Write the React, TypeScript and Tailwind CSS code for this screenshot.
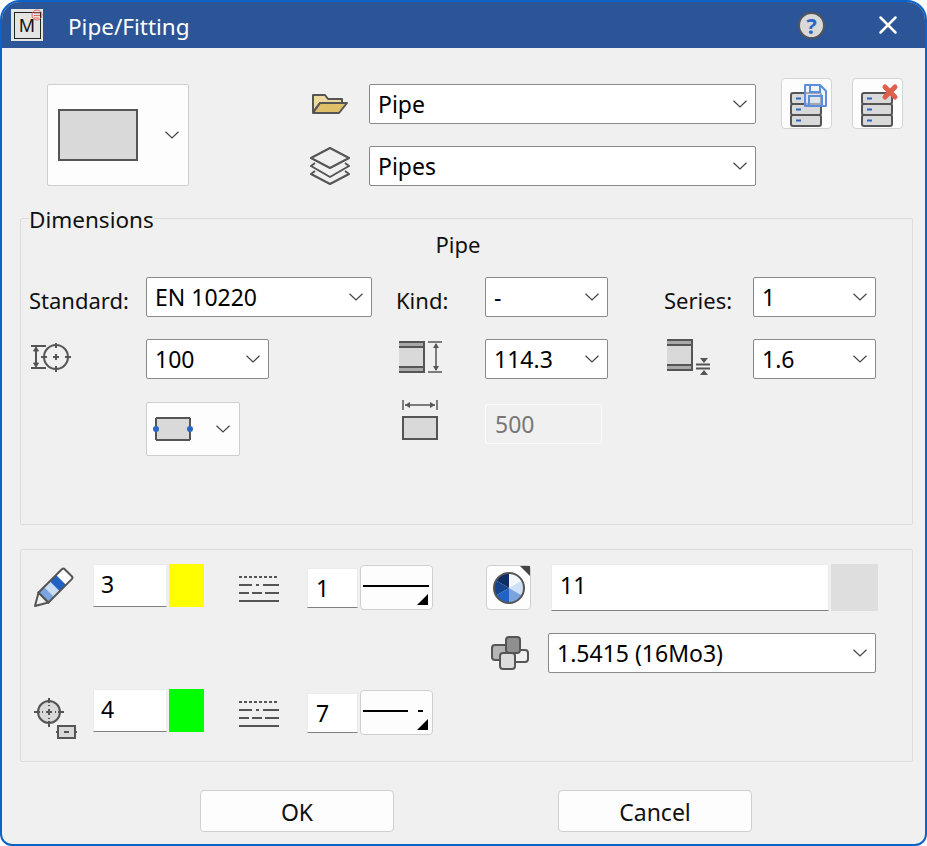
import React from 'react';
import { X } from 'lucide-react';

const chevron = (
    <svg width="14" height="8" viewBox="0 0 14 8" fill="none" stroke="#444" strokeWidth="1.2" className="shrink-0">
        <path d="M0.5 0.8L7 7l6.5-6.2" />
    </svg>
);

const Select = ({ value, className }: { value: string; className: string }) => (
    <div className={`flex items-center justify-between h-10 pl-[8px] pr-[8px] bg-white border border-[#8a8a8a] rounded-[2px] text-[23px] text-black ${className}`}>
        <span className="leading-none">{value}</span>
        {chevron}
    </div>
);

const Field = ({ value, className }: { value: string; className: string }) => (
    <div className={`flex items-center bg-white border border-[#ececec] border-b-[#808080] text-[23px] text-black ${className}`}>
        {value}
    </div>
);

const RowLabel = ({ children }: { children: React.ReactNode }) => (
    <span className="mt-[5px] -ml-px text-[22px] text-[#111] leading-none">{children}</span>
);

const Stack = () => (
    <g stroke="#555" strokeWidth="2" fill="#d9d9d9">
        <rect x="1" y="12" width="30" height="11" rx="2" />
        <rect x="1" y="23" width="30" height="11" rx="2" />
        <rect x="1" y="34" width="30" height="11" rx="2" />
        <path d="M6 17.500h5M6 28.500h5M6 39.500h5" stroke="#2a67c4" fill="none" />
    </g>
);

const LineStyles = () => (
    <svg width="40" height="28" viewBox="0 0 40 28" stroke="#555" strokeWidth="2" fill="none">
        <path d="M0 3h40" strokeDasharray="3 2" />
        <path d="M0 11h13M17 11h3M24 11h16" />
        <path d="M0 19h10M13 19h10M26 19h14" />
        <path d="M0 27h40" />
    </svg>
);

const PipeIcon = () => (
    <g>
        <rect x="0" y="1" width="24" height="30" fill="#d9d9d9" />
        <rect x="0" y="2" width="24" height="4" fill="#aaa" />
        <rect x="0" y="26" width="24" height="4" fill="#aaa" />
        <path d="M0 1h25v30H0" fill="none" stroke="#555" strokeWidth="2" />
        <path d="M0 6h24M0 26h24" stroke="#555" strokeWidth="2" />
    </g>
);

const Corner = () => (
    <span className="absolute right-[4px] bottom-[4px] w-0 h-0 border-l-[11px] border-l-transparent border-b-[11px] border-b-black" />
);

const LineButton = ({ broken }: { broken?: boolean }) => (
    <div className="relative w-[73px] h-[45px] ml-[2px] bg-[#fdfdfd] border border-[#cfcfcf] rounded-[4px]">
        <div className="flex gap-[10px] mt-[19px] mx-[2px]">
            <span className={`h-[2px] bg-black ${broken ? 'w-[45px]' : 'w-[66px]'}`} />
            {broken && <span className="h-[2px] w-[5px] bg-black" />}
        </div>
        <Corner />
    </div>
);

const Swatch = ({ className }: { className: string }) => (
    <div className={`w-[35px] h-[43px] ml-[2px] ${className}`} />
);

export default function App() {
    return (
        <div className="w-[927px] h-[846px] bg-white font-['Noto_Sans','Open_Sans',sans-serif]">
            <div className="flex flex-col h-full bg-[#f0f0f0] border-2 border-[#0b62c9] rounded-t-[20px] rounded-b-[12px] overflow-hidden">
                {/* title bar */}
                <div className="flex items-center h-[46px] shrink-0 bg-[#2b5597] pl-[9px] pr-[22px]">
                    <div className="relative flex items-center justify-center w-8 h-8 bg-[#e4e4e4]">
                        <div className="flex items-center justify-center w-[27px] h-[27px] border border-[#222] text-[18px] text-[#111] leading-none">M</div>
                        <svg className="absolute right-0 top-0" width="12" height="12" viewBox="0 0 12 12" fill="none" stroke="#e06a6a" strokeWidth="1">
                            <circle cx="6" cy="6" r="5" />
                            <path d="M3 4h6M3 6.500h6M3 9h5" />
                        </svg>
                    </div>
                    <span className="ml-[25px] mt-[4px] text-[22.5px] text-white leading-none">Pipe/Fitting</span>
                    <div className="ml-auto flex items-center justify-center w-[27px] h-[27px] rounded-full bg-[#d9d9d9] border-2 border-[#555] text-[22px] font-bold text-[#2a67c4] leading-none">?</div>
                    <X size={30} strokeWidth={2} className="ml-[48px] text-white" />
                </div>

                {/* top row */}
                <div className="flex items-start h-[170px] shrink-0 pl-[45px]">
                    <div className="flex items-center justify-between w-[142px] h-[102px] mt-[36px] pl-[10px] pr-[9px] bg-[#fdfdfd] border border-[#cfcfcf] rounded-[2px]">
                        <div className="w-[80px] h-[52px] bg-[#d9d9d9] border-2 border-[#555]" />
                        {chevron}
                    </div>
                    <div className="flex flex-col gap-[22px] mt-[36px] ml-[121px]">
                        <div className="flex items-center gap-[20px] pl-px">
                            <svg width="38" height="24" viewBox="0 0 38 24">
                                <path d="M2 20V3h12l3 4h14v4H9L2 20z" fill="#edd9a0" stroke="#555" strokeWidth="2" strokeLinejoin="round" />
                                <path d="M2 21l7-10h27l-8 10H2z" fill="#dfc069" stroke="#555" strokeWidth="2" strokeLinejoin="round" />
                            </svg>
                            <Select value="Pipe" className="w-[387px]" />
                        </div>
                        <div className="flex items-center gap-[17px]">
                            <svg width="42" height="40" viewBox="1 0 42 40" fill="none" stroke="#555" strokeWidth="2" strokeLinejoin="round">
                                <path d="M21 2l19 10-19 10L2 12 21 2z" />
                                <path d="M6 17l-4 3 19 11 19-11-4-3" />
                                <path d="M6 25l-4 3 19 10 19-10-4-3" />
                            </svg>
                            <Select value="Pipes" className="w-[387px]" />
                        </div>
                    </div>
                    <div className="flex gap-[20px] mt-[30px] ml-[25px]">
                        <div className="flex items-center justify-center w-[51px] h-[51px] bg-[#fdfdfd] border border-[#d4d4d4] rounded-[4px]">
                            <svg width="44" height="46" viewBox="0 0 44 46">
                                <g transform="translate(5 0)"><Stack /></g>
                                <path d="M20 4h15l6 6v15H20V4z" fill="#e4ecf8" fillOpacity="0.55" stroke="#5b8ede" strokeWidth="2" strokeLinejoin="round" />
                                <path d="M25 4v7h10V4M24 25V15h13v10" fill="none" stroke="#5b8ede" strokeWidth="2" />
                            </svg>
                        </div>
                        <div className="flex items-center justify-center w-[51px] h-[51px] bg-[#fdfdfd] border border-[#d4d4d4] rounded-[4px]">
                            <svg width="44" height="46" viewBox="0 0 44 46">
                                <g transform="translate(5 0)"><Stack /></g>
                                <path d="M29 6l10 10M39 6L29 16" stroke="#df5f4c" strokeWidth="5" strokeLinecap="round" />
                            </svg>
                        </div>
                    </div>
                </div>

                {/* dimensions group */}
                <fieldset className="relative h-[307px] shrink-0 ml-[18px] mr-[12px] border border-[#dcdcdc] rounded-[2px] min-w-0">
                    <span className="absolute left-[8px] top-[-10px] bg-[#f0f0f0] text-[22.5px] text-[#111] leading-none">Dimensions</span>
                    <div className="pt-[13px] pr-[17px] text-center text-[22px] text-[#111] leading-[24px]">Pipe</div>
                    <div className="grid grid-cols-[116px_251px_88px_180px_88px_123px] mt-[21px] pl-[9px] items-center">
                        <RowLabel>Standard:</RowLabel>
                        <Select value="EN 10220" className="w-[226px]" />
                        <RowLabel>Kind:</RowLabel>
                        <Select value="-" className="w-[123px]" />
                        <RowLabel>Series:</RowLabel>
                        <Select value="1" className="w-[123px]" />

                        <div className="mt-[22px]">
                            <svg width="42" height="32" viewBox="0 0 42 32" fill="none" stroke="#555" strokeWidth="2">
                                <path d="M1 3h15M1 25h15M6 5v18" />
                                <path d="M3.500 8l2.500-4 2.500 4zM3.500 20l2.500 4 2.500-4z" fill="#555" strokeWidth="1" />
                                <circle cx="26" cy="14" r="12" />
                                <path d="M26 -1v6M26 23v6M11 14h6M35 14h6M23 14h6M26 11v6" />
                            </svg>
                        </div>
                        <div className="mt-[22px]"><Select value="100" className="w-[123px]" /></div>
                        <div className="mt-[22px] pl-[2px]">
                            <svg width="46" height="36" viewBox="0 0 46 36">
                                <PipeIcon />
                                <path d="M29 1h14M29 31h14M37 3v26" stroke="#555" strokeWidth="1.500" fill="none" />
                                <path d="M34 7l3-5 3 5zM34 25l3 5 3-5z" fill="#555" />
                            </svg>
                        </div>
                        <div className="mt-[22px]"><Select value="114.3" className="w-[123px]" /></div>
                        <div className="mt-[22px] pl-[2px]">
                            <svg width="46" height="40" viewBox="0 0 46 40">
                                <PipeIcon />
                                <path d="M29 25.500h14M29 29.500h14" stroke="#555" strokeWidth="2" fill="none" />
                                <path d="M33 19h8l-4 5zM33 36h8l-4-5z" fill="#555" />
                            </svg>
                        </div>
                        <div className="mt-[22px]"><Select value="1.6" className="w-[123px]" /></div>

                        <div />
                        <div className="mt-[23px] self-start">
                            <div className="flex items-center justify-between w-[94px] h-[54px] pl-[6px] pr-[9px] bg-[#fdfdfd] border border-[#cfcfcf] rounded-[2px]">
                                <svg width="42" height="26" viewBox="0 0 42 26">
                                    <rect x="3" y="1" width="34" height="24" fill="#d9d9d9" />
                                    <path d="M3 2h34M3 24h34M3 2v22M37 2v22" stroke="#555" strokeWidth="2" fill="none" />
                                    <circle cx="3" cy="13" r="3" fill="#2a67c4" />
                                    <circle cx="37" cy="13" r="3" fill="#2a67c4" />
                                </svg>
                                {chevron}
                            </div>
                        </div>
                        <div className="mt-[21px] self-start pl-[5px]">
                            <svg width="36" height="40" viewBox="0 0 36 40">
                                <path d="M1 0v10M35 0v10M3 5h30" stroke="#555" strokeWidth="1.500" fill="none" />
                                <path d="M8 2L3 5l5 3zM28 2l5 3-5 3z" fill="#555" />
                                <rect x="1" y="17" width="34" height="22" fill="#d9d9d9" stroke="#555" strokeWidth="2" />
                            </svg>
                        </div>
                        <div className="mt-[25px] self-start">
                            <div className="flex items-center w-[117px] h-10 pl-[9px] bg-[#f0f0f0] border border-[#fafafa] text-[23px] text-[#777] rounded-[2px]">500</div>
                        </div>
                        <div />
                        <div />
                    </div>
                </fieldset>

                {/* attributes group */}
                <div className="flex h-[213px] shrink-0 mt-[24px] ml-[18px] mr-[12px] border border-[#dcdcdc] rounded-[2px] pl-[13px] pt-[14px]">
                    <div className="flex flex-col gap-[82px]">
                        <div className="flex items-start h-[43px]">
                            <svg className="mt-[3px]" width="40" height="40" viewBox="0 0 40 40">
                                <g transform="translate(1 39) rotate(-45)">
                                    <path d="M0 0l12-7v14z" fill="#f0f0f0" stroke="#555" strokeWidth="2" strokeLinejoin="round" />
                                    <rect x="12" y="-7" width="8" height="14" fill="#7ba3e0" />
                                    <rect x="20" y="-7" width="8" height="14" fill="#c9dcf4" />
                                    <rect x="28" y="-7" width="9" height="14" fill="#1f62c4" />
                                    <rect x="37" y="-7" width="10" height="14" fill="#fff" />
                                    <path d="M12-7h33q2 0 2 2v10q0 2-2 2H12z" fill="none" stroke="#555" strokeWidth="2" />
                                </g>
                            </svg>
                            <Field value="3" className="ml-[19px] w-[74px] h-[43px] pl-[7px] pb-[2px]" />
                            <Swatch className="bg-[#ffff00]" />
                            <div className="ml-[35px] mt-[10px]"><LineStyles /></div>
                            <Field value="1" className="ml-[28px] mt-[4px] w-[51px] h-10 pl-[8px]" />
                            <div className="mt-[1px]"><LineButton /></div>
                        </div>
                        <div className="flex items-start h-[43px]">
                            <svg className="mt-[9px]" width="44" height="42" viewBox="0 0 44 42" fill="none" stroke="#555" strokeWidth="2">
                                <circle cx="15" cy="14" r="11" fill="#d9d9d9" />
                                <path d="M15 -1v6M15 23v6M0 14h6M24 14h6M12 14h6M15 11v6" />
                                <path d="M15 7v1M15 20v1M8 14h1M21 14h1" />
                                <rect x="24" y="28" width="17" height="12" fill="#d9d9d9" />
                                <path d="M30 34h5M22 34h2M41 34h2" />
                            </svg>
                            <Field value="4" className="ml-[15px] w-[74px] h-[43px] pl-[7px] pb-[2px]" />
                            <Swatch className="bg-[#00ff00]" />
                            <div className="ml-[35px] mt-[10px]"><LineStyles /></div>
                            <Field value="7" className="ml-[28px] mt-[4px] w-[51px] h-10 pl-[8px]" />
                            <div className="mt-[1px]"><LineButton broken /></div>
                        </div>
                    </div>
                    <div className="flex flex-col gap-[22px] ml-[53px]">
                        <div className="flex items-start h-[47px]">
                            <div className="relative flex items-center justify-center w-[45px] h-[45px] mt-[1px] bg-[#fdfdfd] border border-[#cfcfcf] rounded-[4px]">
                                <svg width="34" height="34" viewBox="0 0 34 34">
                                    <path d="M17 17V2a15 15 0 0 1 13 7.500z" fill="#f4f7fc" />
                                    <path d="M17 17l13-7.500a15 15 0 0 1 0 15z" fill="#cfdff5" />
                                    <path d="M17 17l13 7.500A15 15 0 0 1 17 32z" fill="#7ba3e0" />
                                    <path d="M17 17v15A15 15 0 0 1 4 24.500z" fill="#1f62c4" />
                                    <path d="M17 17L4 24.500a15 15 0 0 1 0-15z" fill="#15448f" />
                                    <path d="M17 17L4 9.500A15 15 0 0 1 17 2z" fill="#0e2f66" />
                                    <circle cx="17" cy="17" r="15" fill="none" stroke="#555" strokeWidth="2" />
                                </svg>
                                <span className="absolute right-0 top-0 w-0 h-0 border-l-[10px] border-l-transparent border-t-[10px] border-t-[#444]" />
                            </div>
                            <Field value="11" className="ml-[20px] w-[278px] h-[47px] pl-[8px] pb-[4px]" />
                            <div className="ml-[2px] w-[47px] h-[47px] bg-[#dedede]" />
                        </div>
                        <div className="flex items-center">
                            <svg className="ml-[5px]" width="38" height="34" viewBox="0 0 38 34" fill="none" stroke="#555" strokeWidth="2">
                                <rect x="1" y="9" width="18" height="15" rx="3" fill="#b5b5b5" />
                                <rect x="20" y="14" width="17" height="12" rx="3" fill="#f0f0f0" />
                                <rect x="15" y="1" width="14" height="16" rx="3" fill="#8f8f8f" />
                                <rect x="9" y="17" width="15" height="16" rx="3" fill="#dcdcdc" />
                            </svg>
                            <Select value="1.5415 (16Mo3)" className="ml-[19px] w-[328px]" />
                        </div>
                    </div>
                </div>

                {/* buttons */}
                <div className="flex gap-[164px] mt-[28px] pl-[198px]">
                    <div className="flex items-center justify-center w-[194px] h-[42px] pt-[3px] bg-[#fdfdfd] border border-[#d0d0d0] rounded-[4px] text-[23px] text-[#111] leading-none">OK</div>
                    <div className="flex items-center justify-center w-[194px] h-[42px] pt-[3px] bg-[#fdfdfd] border border-[#d0d0d0] rounded-[4px] text-[23px] text-[#111] leading-none">Cancel</div>
                </div>
            </div>
        </div>
    );
}
